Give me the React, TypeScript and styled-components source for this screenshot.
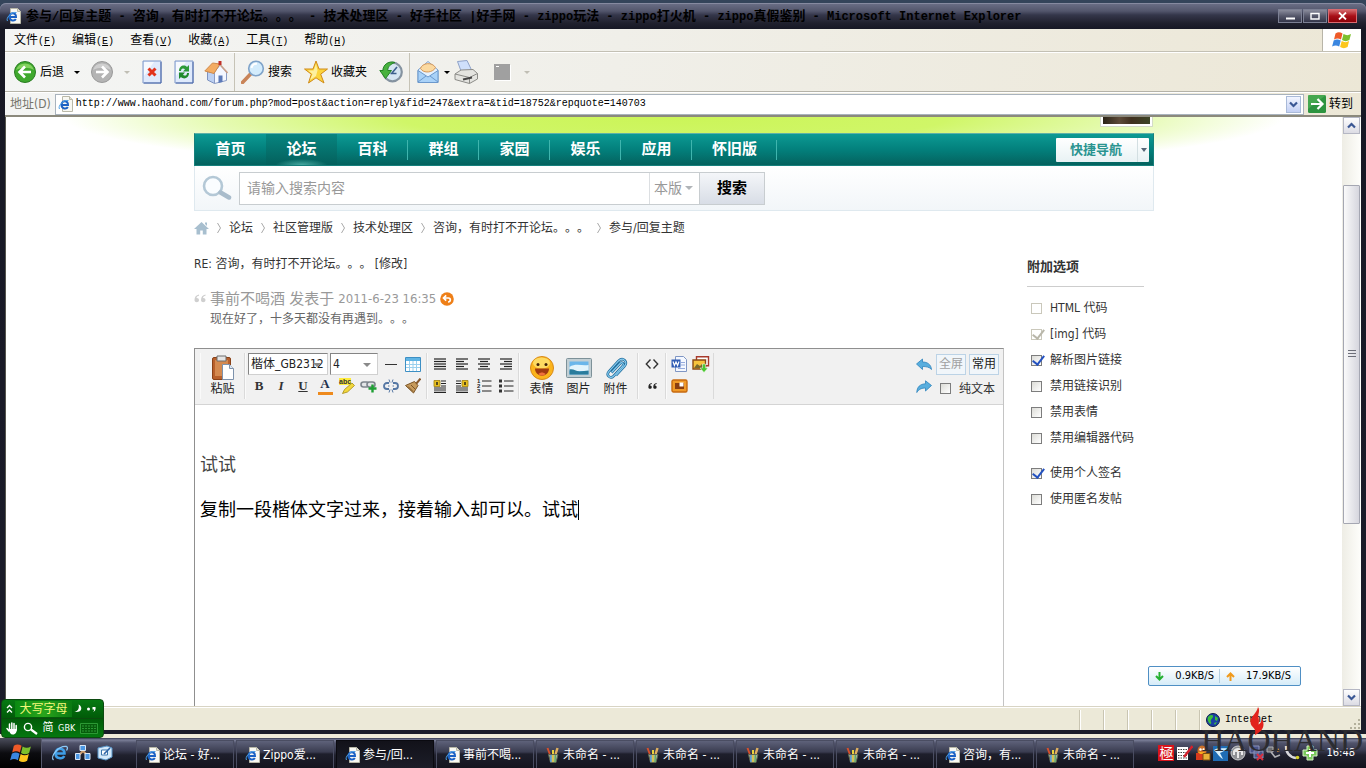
import React from "react";
import styled, { createGlobalStyle, css } from "styled-components";

const UI = '"DejaVu Sans Condensed", "Noto Sans CJK SC", sans-serif';
const MONO = '"Liberation Mono", "Noto Sans CJK SC", monospace';

const Global = createGlobalStyle`
  * { box-sizing: border-box; }
  body { margin: 0; background: #1b1c28; font-family: ${UI}; font-size: 12px; line-height: 16px; color: #000; text-spacing-trim: space-all; font-feature-settings: "chws" 0, "halt" 0; }
  button, input, select { font: inherit; color: inherit; margin: 0; padding: 0; border: 0; background: none; border-radius: 0; }
  button { cursor: pointer; }
  a { color: inherit; text-decoration: none; }
  svg { display: block; flex: none; }
  h2, p, ul, ol { margin: 0; padding: 0; }
  ul, ol { list-style: none; }
`;

/* ---------- window frame ---------- */

const Desktop = styled.div`
  position: relative;
  display: flex;
  flex-direction: column;
  height: 100vh;
  min-height: 480px;
  padding-top: 3px;
  background: #34445a;
  overflow: hidden;
`;

const Window = styled.div`
  flex: 1;
  min-height: 0;
  display: flex;
  flex-direction: column;
  padding: 0 5px 4px;
  border-radius: 6px 6px 0 0;
  background: linear-gradient(#6c7088 0, #53566c 8px, #34364a 12px, #20212e 20px, #171824 26px, #1b1c2a 100%);
  box-shadow: inset 0 1px 0 #868aa0;
`;

const TitleBar = styled.header`
  display: flex;
  align-items: center;
  height: 26px;
  padding: 0 4px 0 1px;
`;

const TitleText = styled.div`
  flex: 1;
  min-width: 0;
  margin-left: 4px;
  padding-top: 2px;
  overflow: hidden;
  white-space: pre;
  font: bold 12px/16px ${MONO};
`;

const Han = styled.span`
  font-size: 13px;
`;

const WindowButtons = styled.div`
  display: flex;
  gap: 1px;
`;

const WindowButton = styled.button<{ $close?: boolean }>`
  display: flex;
  align-items: center;
  justify-content: center;
  width: ${(p) => (p.$close ? 29 : 24)}px;
  height: 14px;
  border: 1px solid ${(p) => (p.$close ? "#d86a70" : "#7c8094")};
  background: ${(p) =>
    p.$close
      ? "linear-gradient(#d4686c, #a81018 50%, #8c0008)"
      : "linear-gradient(#8a8c9c, #55576a 50%, #34364a)"};
`;

const Chrome = styled.div`
  background: linear-gradient(100deg, #f4f5f4 0, #f0efe9 45%, #ece7d6 100%);
`;

const MenuBar = styled.nav`
  display: flex;
  height: 23px;
  padding-left: 1px;
  border-bottom: 1px solid #c3c0b4;
`;

const MenuItem = styled.button`
  padding: 2px 8px 0;
  white-space: nowrap;
`;

const Key = styled.span`
  font: 10px/16px ${MONO};
  u { text-underline-offset: 1px; }
`;

const Throbber = styled.div`
  display: flex;
  align-items: center;
  justify-content: center;
  width: 39px;
  margin-left: auto;
  border-left: 1px solid #b8b5a8;
  background: #fff;
`;

const ToolBar = styled.div`
  display: flex;
  align-items: center;
  height: 40px;
  padding-left: 8px;
  border-top: 1px solid #fff;
  border-bottom: 1px solid #b5b3a8;
`;

const ToolGroup = styled.div<{ $gap?: number }>`
  display: flex;
  align-items: center;
  gap: ${(p) => p.$gap ?? 0}px;
`;

const ToolButton = styled.button`
  display: flex;
  align-items: center;
  gap: 3px;
  white-space: nowrap;
`;

const DropButton = styled.button<{ $wide?: boolean; $off?: boolean }>`
  display: flex;
  justify-content: center;
  width: ${(p) => (p.$wide ? 26 : 14)}px;
  &::after {
    content: "";
    border: 3px solid transparent;
    border-top-color: ${(p) => (p.$off ? "#c0beb4" : "#000")};
    border-bottom: 0;
  }
`;

const ToolSeparator = styled.div`
  width: 1px;
  height: 38px;
  margin: 0 6px;
  background: #c6c3b6;
`;

const AddressBar = styled.form`
  display: flex;
  align-items: center;
  height: 25px;
  padding: 0 8px 0 5px;
  border-top: 1px solid #fff;
  border-bottom: 2px solid #8b897c;
  gap: 4px;
`;

const AddressLabel = styled.label`
  color: #76756c;
  white-space: nowrap;
`;

const AddressField = styled.div`
  flex: 1;
  min-width: 0;
  display: flex;
  align-items: center;
  gap: 2px;
  height: 21px;
  padding: 0 2px;
  border: 1px solid #a9b3bd;
  background: #fff;
`;

const AddressInput = styled.input`
  flex: 1;
  min-width: 0;
  font: 10px/16px ${MONO};
  outline: 0;
`;

const SquareButton = styled.button`
  display: flex;
  align-items: center;
  justify-content: center;
  flex: none;
  width: 15px;
  height: 17px;
  border: 1px solid #a9bad8;
  background: linear-gradient(#f2f5ff, #c3d0f4);
`;

/* ---------- viewport ---------- */

const Viewport = styled.div`
  flex: 1;
  min-height: 0;
  display: flex;
  background: #fff;
  border-left: 1px solid #55554e;
`;

const Page = styled.main`
  flex: 1;
  min-width: 0;
  display: flex;
  flex-direction: column;
  color: #333;
  overflow: hidden;
  background: radial-gradient(ellipse 610px 56px at 50% 0, #cbf558 0, #d0f668 45%, #e6fbb4 76%, #fff 100%) no-repeat #fff;
`;

const Center = styled.div`
  flex: 1;
  min-height: 0;
  display: flex;
  flex-direction: column;
  width: 960px;
  max-width: 100%;
  margin: 0 auto;
`;

const TopRow = styled.div`
  display: flex;
  justify-content: flex-end;
  align-items: flex-start;
  height: 16px;
`;

const Avatar = styled.div`
  width: 53px;
  height: 10px;
  margin-right: 1px;
  border: 1px solid #d4dcc8;
  border-top: 0;
  padding: 0 2px 2px;
  background: #fff;
  &::before {
    content: "";
    display: block;
    height: 7px;
    background: linear-gradient(90deg, #2b2418, #5c4a38 35%, #40301f 60%, #3c4426);
  }
`;

const Nav = styled.nav`
  display: flex;
  align-items: stretch;
  flex: none;
  height: 33px;
  border: 1px solid #16807c;
  border-top-color: #5fb0a8;
  background: linear-gradient(#0c9a94, #03807c 50%, #04625e);
`;

const NavLink = styled.a<{ $active?: boolean; $line?: boolean }>`
  position: relative;
  display: flex;
  align-items: center;
  justify-content: center;
  min-width: 71px;
  padding: 0 20px 2px;
  font-size: 15px;
  font-weight: bold;
  color: #fff;
  white-space: nowrap;
  ${(p) =>
    p.$active &&
    css`
      background: radial-gradient(ellipse 26px 6px at 50% 100%, #48aaa2, transparent),
        linear-gradient(#078580, #04605c);
    `}
  ${(p) =>
    p.$line &&
    css`
      &::after {
        content: "";
        position: absolute;
        right: 0;
        top: 6px;
        bottom: 5px;
        width: 1px;
        background: #3fb5ae;
      }
    `}
`;

const QuickNav = styled.button`
  display: flex;
  align-items: stretch;
  align-self: center;
  height: 24px;
  margin-left: auto;
  margin-right: 4px;
  border-radius: 1px;
  background: linear-gradient(#fff, #e8f2f4);
  color: #2a9490;
  font-size: 13px;
  font-weight: bold;
  line-height: 23px;
  white-space: nowrap;
`;

const QuickLabel = styled.span`
  padding: 0 15px 0 14px;
`;

const QuickArrow = styled.span`
  display: flex;
  align-items: center;
  width: 12px;
  padding-left: 3px;
  border-left: 1px solid #d3dfe2;
  &::after {
    content: "";
    border: 3px solid transparent;
    border-top: 4px solid #567;
    border-bottom: 0;
  }
`;

const SearchRow = styled.form`
  display: flex;
  align-items: center;
  flex: none;
  height: 45px;
  padding-left: 7px;
  border: 1px solid #dfe9ef;
  border-top: 0;
  background: linear-gradient(#fff, #f2f6f9);
`;

const SearchBox = styled.div`
  display: flex;
  height: 33px;
  margin-left: 7px;
  border: 1px solid #c8cdd0;
  background: #fff;
`;

const SearchInput = styled.input`
  width: 409px;
  padding: 0 7px;
  font-size: 14px;
  outline: 0;
  &::placeholder { color: #999; }
`;

const ScopeWrap = styled.div`
  display: flex;
  align-items: center;
  width: 50px;
  border-left: 1px solid #dcdfe2;
  padding-left: 4px;
  color: #999;
  font-size: 14px;
  &::after {
    content: "";
    border: 4px solid transparent;
    border-top-color: #b0b4b8;
    border-bottom: 0;
  }
`;

const ScopeSelect = styled.select`
  appearance: none;
  width: 31px;
  outline: 0;
`;

const SearchButton = styled.button`
  width: 65px;
  border-left: 1px solid #c8cdd0;
  background: linear-gradient(#f4f6f9, #d8dde6);
  color: #000;
  font-size: 15px;
  font-weight: bold;
`;

const Crumbs = styled.ol`
  display: flex;
  align-items: center;
  flex: none;
  height: 33px;
  white-space: nowrap;
  li { display: flex; align-items: center; }
`;

const Split = styled.div`
  flex: 1;
  min-height: 0;
  display: flex;
  justify-content: space-between;
`;

const MainColumn = styled.section`
  display: flex;
  flex-direction: column;
  width: 810px;
  padding-top: 12px;
`;

const Subject = styled.p``;

const Quote = styled.blockquote`
  display: grid;
  grid-template-columns: 16px 1fr;
  align-items: center;
  row-gap: 2px;
  margin: 16px 0 19px;
  color: #666;
`;

const QuoteHead = styled.div`
  display: flex;
  align-items: center;
  gap: 4px;
  height: 21px;
  color: #999;
  font-size: 15px;
`;

const QuoteDate = styled.time`
  font-size: 13px;
`;

const QuoteBody = styled.p`
  grid-column: 2;
  height: 18px;
`;

/* ---------- editor ---------- */

const Editor = styled.div`
  flex: 1;
  min-height: 0;
  display: flex;
  flex-direction: column;
  border: 1px solid #8f8f8f;
  border-right-color: #c4c4c4;
  border-bottom: 0;
  background: #fff;
`;

const EditorBar = styled.div`
  display: flex;
  align-items: flex-start;
  flex: none;
  height: 56px;
  padding: 4px 4px 0 5px;
  border-bottom: 1px solid #d4d4d4;
  background: #f1f1f1;
`;

const BarSection = styled.div<{ $pad?: number }>`
  display: grid;
  grid-template-rows: 22px 22px;
  height: 46px;
  padding: 0 ${(p) => p.$pad ?? 3}px;
  border-left: 1px solid #fafafa;
  border-right: 1px solid #dadada;
`;

const BarRow = styled.div`
  display: flex;
  align-items: center;
`;

const IconButton = styled.button`
  display: flex;
  align-items: center;
  justify-content: center;
  width: 22px;
  height: 22px;
`;

const TextFormat = styled(IconButton)<{ $italic?: boolean; $underline?: boolean }>`
  font: bold 13px/16px "Liberation Serif", serif;
  font-style: ${(p) => (p.$italic ? "italic" : "normal")};
  text-decoration: ${(p) => (p.$underline ? "underline" : "none")};
  color: #333;
`;

const FontColor = styled(TextFormat)`
  &::before {
    content: "A";
    width: 15px;
    height: 14px;
    line-height: 12px;
    border-bottom: 3px solid #ee8a1d;
    color: #22304c;
  }
`;

const BigButton = styled.button`
  display: flex;
  flex-direction: column;
  align-items: center;
  grid-row: 1 / 3;
  width: 37px;
  padding-top: 2px;
  color: #222;
  white-space: nowrap;
`;

const BigRow = styled.div`
  display: flex;
  grid-row: 1 / 3;
`;

const SelectWrap = styled.div<{ $size: "font" | "number" }>`
  position: relative;
  width: ${(p) => (p.$size === "font" ? 80 : 48)}px;
  height: 22px;
  margin-right: 2px;
  border: 1px solid #848484;
  border-right-color: #d0d0d0;
  border-bottom-color: #d0d0d0;
  background: #fff;
  &::after {
    content: "";
    position: absolute;
    right: 6px;
    top: 9px;
    border: 4px solid transparent;
    border-top-color: #8a8a8a;
    border-bottom: 0;
  }
`;

const FormatSelect = styled.select`
  appearance: none;
  display: block;
  width: 100%;
  height: 20px;
  padding-left: 2px;
  color: #222;
  outline: 0;
`;

const BarTail = styled.div`
  display: grid;
  grid-template-columns: 22px auto;
  grid-template-rows: 22px 24px;
  align-items: center;
  margin-left: auto;
  column-gap: 1px;
`;

const TailRow = styled.div`
  display: flex;
  align-items: center;
  gap: 3px;
`;

const TailButton = styled.button<{ $off?: boolean }>`
  width: 30px;
  height: 21px;
  border: 1px solid #bcd3e6;
  background: #f1f6fa;
  color: ${(p) => (p.$off ? "#a0a0a0" : "#222")};
`;

const PlainText = styled.div`
  display: flex;
  align-items: center;
  gap: 8px;
  padding: 3px 0 0 4px;
  white-space: nowrap;
`;

const EditorBody = styled.div`
  flex: 1;
  min-height: 0;
  padding: 46px 5px 0;
  font-size: 18px;
  line-height: 28px;
  overflow: hidden;
  outline: 0;
`;

const BodyLine = styled.p<{ $typed?: boolean }>`
  display: flex;
  align-items: center;
  margin-bottom: 17px;
  color: ${(p) => (p.$typed ? "#000" : "#444")};
  white-space: nowrap;
`;

const Caret = styled.span`
  width: 1px;
  height: 20px;
  background: #000;
`;

/* ---------- options ---------- */

const Aside = styled.aside`
  width: 127px;
  padding: 15px 10px 0 0;
`;

const AsideTitle = styled.h2`
  padding-bottom: 11px;
  border-bottom: 1px solid #cdcdcd;
  font-size: 13px;
  line-height: 16px;
`;

const OptionList = styled.ul<{ $first?: boolean }>`
  padding: ${(p) => (p.$first ? "8px" : "9px")} 0 0 4px;
`;

const Option = styled.li`
  display: flex;
  align-items: center;
  gap: 8px;
  height: 26px;
  white-space: nowrap;
`;

const Check = styled.input.attrs({ type: "checkbox" })`
  appearance: none;
  position: relative;
  flex: none;
  width: 11px;
  height: 11px;
  border: 1px solid #7d7d7d;
  background: linear-gradient(135deg, #dcdcd7, #fff);
  &:disabled { border-color: #cac8bb; background: #fff; }
  &:checked::after {
    content: "";
    position: absolute;
    left: 3px;
    top: -3px;
    width: 5px;
    height: 10px;
    border: solid #2452c0;
    border-width: 0 2px 2px 0;
    transform: rotate(38deg);
  }
  &:checked:disabled::after { border-color: #b9b7aa; }
`;

/* ---------- scrollbar ---------- */

const ScrollBar = styled.div`
  display: flex;
  flex-direction: column;
  width: 19px;
  padding: 0 1px;
  background: linear-gradient(90deg, #eeede5, #fefefb);
`;

const ScrollArrow = styled.button`
  display: flex;
  align-items: center;
  justify-content: center;
  height: 17px;
  border: 1px solid #b5b7c4;
  background: linear-gradient(#fdfdfe, #dcdce4);
`;

const ScrollTrack = styled.div`
  flex: 1;
  display: flex;
  flex-direction: column;
`;

const ScrollGap = styled.div<{ $share: number }>`
  flex: ${(p) => p.$share};
`;

const ScrollThumb = styled.div`
  flex: 338;
  display: flex;
  align-items: center;
  justify-content: center;
  border: 1px solid #a5a7b2;
  border-radius: 1px;
  background: linear-gradient(90deg, #fafafa, #d6d6de);
`;

/* ---------- status bar ---------- */

const StatusBar = styled.footer`
  display: flex;
  align-items: stretch;
  height: 24px;
  padding-top: 3px;
  border-top: 1px solid #d8d4c4;
  background: #ece9d8;
  box-shadow: inset 0 1px 0 #fff;
`;

const StatusSpace = styled.div`
  flex: 1;
`;

const StatusCell = styled.div<{ $zone?: boolean }>`
  display: flex;
  align-items: center;
  gap: 5px;
  width: ${(p) => (p.$zone ? 162 : 24)}px;
  padding-left: 6px;
  border-left: 1px solid #c9c5b2;
  box-shadow: inset 1px 0 0 #fff;
  font: 10px/16px ${MONO};
`;

const Grip = styled.div`
  margin-left: auto;
  align-self: flex-end;
`;

/* ---------- task bar ---------- */

const TaskBar = styled.footer`
  display: flex;
  align-items: stretch;
  flex: none;
  height: 34px;
  border-top: 4px solid #efebd9;
  background: linear-gradient(#343850 0, #7b7f98 2px, #50536b 5px, #3a3c52 12px, #20212e 17px, #12121c 100%);
`;

const StartButton = styled.button`
  display: flex;
  align-items: center;
  justify-content: center;
  width: 42px;
  border-right: 1px solid #55586c;
  background: linear-gradient(#4b4d5c, #0c0c10 50%, #000);
`;

const QuickLaunch = styled.div`
  display: flex;
  align-items: center;
  gap: 5px;
  width: 93px;
  padding-left: 9px;
`;

const TaskList = styled.div`
  display: flex;
  padding-top: 2px;
`;

const Task = styled.button<{ $active?: boolean }>`
  display: flex;
  align-items: center;
  gap: 2px;
  width: 98px;
  margin: 0 1px;
  padding-left: 8px;
  border: 1px solid ${(p) => (p.$active ? "#0a0a10" : "#4a4d62")};
  border-bottom: 0;
  background: ${(p) =>
    p.$active ? "linear-gradient(#12121a, #1c1d28)" : "linear-gradient(#5e627a, #3a3c50 11px, #1e1f2c 13px, #15151f)"};
  color: #fff;
  white-space: nowrap;
`;

const Tray = styled.div`
  display: flex;
  align-items: center;
  gap: 2px;
  margin-left: auto;
  padding-right: 11px;
`;

const Seal = styled.span`
  width: 16px;
  height: 16px;
  background: #d8141c;
  color: #fff;
  font-size: 14px;
  line-height: 16px;
  text-align: center;
`;

const Clock = styled.time`
  margin-left: 6px;
  color: #fff;
  font-size: 11px;
`;

/* ---------- floating widgets ---------- */

const SpeedMeter = styled.div`
  position: absolute;
  right: 65px;
  bottom: 82px;
  display: flex;
  align-items: center;
  justify-content: space-between;
  width: 153px;
  height: 20px;
  padding: 0 9px 0 6px;
  border: 1px solid #4f8fc4;
  border-radius: 2px;
  background: linear-gradient(#fff, #d6ecf8);
  font-size: 11px;
`;

const MeterLine = styled.span`
  width: 1px;
  height: 14px;
  margin: 0 -6px;
  background: #b4cfe0;
`;

const ImeBar = styled.div`
  position: absolute;
  left: 1px;
  bottom: 30px;
  display: flex;
  flex-direction: column;
  width: 103px;
  height: 39px;
  border: 1px solid #0c4a10;
  border-radius: 4px;
  background: linear-gradient(#067a12, #015a08 50%, #05780f);
  color: #fff;
`;

const ImeRow = styled.div`
  display: flex;
  align-items: center;
  justify-content: space-between;
  flex: 1;
  padding: 0 5px 0 4px;
  & + & { border-top: 1px solid #0b4c0e; }
`;

const ImeMode = styled.button`
  padding: 0 4px;
  background: linear-gradient(90deg, #0a8a12, #2aa51c 50%, #0a7a12);
  color: #f4f77a;
  white-space: nowrap;
`;

const ImeLabel = styled.span`
  font-size: 11px;
`;

const Gbk = styled.span`
  font: 9px/14px "DejaVu Sans Condensed", sans-serif;
`;

const Watermark = styled.div`
  position: absolute;
  right: 3px;
  bottom: 16px;
  color: #2c2c30;
  font: 32px/24px "Liberation Serif", serif;
  pointer-events: none;
  svg {
    position: absolute;
    left: 48px;
    bottom: 17px;
  }
`;

/* ---------- icons ---------- */

const IePage = () => (
  <svg width="16" height="16" viewBox="0 0 16 16">
    <path d="M4.5.5h7l3 3v12h-10z" fill="#f8f8f2" stroke="#b9b8a8" />
    <path d="M11.500.5v3h3" fill="#e4e2d2" stroke="#b9b8a8" />
    <path d="M3 9h7c0-5-6.500-5-6.500-.200C3.500 13 8.500 13.500 9.800 11" fill="none" stroke="#1c62c4" strokeWidth="2" />
    <path d="M1.500 13C-.5 10.500 5 3.500 10.500 4.500" fill="none" stroke="#4aa0e8" />
  </svg>
);

const IeLogo = () => (
  <svg width="18" height="18" viewBox="0 0 18 18">
    <path d="M4.500 9.500h9c.3-6-8.700-6.500-8.900-.3C4.500 15 11.500 15.500 13.200 12" fill="none" stroke="#3f9fe8" strokeWidth="2.600" />
    <path d="M2.500 16C-1 13 7 1.500 15.500 2.500c1.500.5 1 2.500 0 4" fill="none" stroke="#8ccaf8" strokeWidth="1.300" />
  </svg>
);

const WinFlag = ({ size }: { size: number }) => (
  <svg width={size} height={size} viewBox="0 0 20 20">
    <path d="M3.500 3.500c2.500-1.700 4.500-1.500 7 0L9 9.500c-2.500-1.500-4.500-1.500-7 0z" fill="#ee5a28" />
    <path d="M11.500 4c2.500 1.500 5 1.500 7.500 0l-1.600 6c-2.500 1.500-4.900 1.500-7.400 0z" fill="#7cc02c" />
    <path d="M1.700 10.600c2.500-1.600 4.500-1.500 7 0l-1.500 6c-2.500-1.500-4.500-1.500-7.100 0z" fill="#3a86e0" />
    <path d="M9.700 11c2.500 1.500 4.900 1.500 7.400 0l-1.500 6c-2.500 1.500-5 1.500-7.500 0z" fill="#fcc61c" />
  </svg>
);

const RoundArrow = ({ off }: { off?: boolean }) => (
  <svg width="24" height="24" viewBox="0 0 24 24">
    <circle cx="12" cy="12" r="10.500" fill={off ? "#b4b4b4" : "#3fa82e"} stroke={off ? "#9a9a9a" : "#2a7d22"} />
    <path d="M3 10a9.500 9.500 0 0 1 18 0c-5-3-12-3-18 0z" fill={off ? "#cfcfcf" : "#82d25e"} />
    <path
      d={off ? "M6 12h11M12 6.500l5.500 5.500L12 17.500" : "M18 12H7M12 6.500L6.500 12l5.500 5.500"}
      fill="none"
      stroke="#fff"
      strokeWidth="2.600"
    />
  </svg>
);

const StopIcon = () => (
  <svg width="24" height="24" viewBox="0 0 24 24">
    <path d="M3 1h18v22H3z" fill="#dfeafc" stroke="#7c96c8" />
    <path d="M4 2h10L4 16z" fill="#fff" opacity=".7" />
    <path d="M21 2v21H4" fill="none" stroke="#4c68a8" />
    <path d="M8.500 8.500l7 7M15.500 8.500l-7 7" stroke="#e2331c" strokeWidth="3" />
  </svg>
);

const RefreshIcon = () => (
  <svg width="24" height="24" viewBox="0 0 24 24">
    <path d="M3 1h18v22H3z" fill="#dfeafc" stroke="#7c96c8" />
    <path d="M4 2h10L4 16z" fill="#fff" opacity=".7" />
    <path d="M21 2v21H4" fill="none" stroke="#4c68a8" />
    <path d="M7 11c0-5 5-7 8-4l2-2v6.500h-6l2-2.200c-2-1.800-4-.8-4 1.700z" fill="#2c9a3a" />
    <path d="M17 13c0 5-5 7-8 4l-2 2v-6.500h6l-2 2.200c2 1.800 4 .8 4-1.700z" fill="#1f8a2e" />
  </svg>
);

const HomeIcon = () => (
  <svg width="24" height="24" viewBox="0 0 24 24">
    <path d="M3.500 11.500v8.500l7 3.500V13z" fill="#bcd0f2" stroke="#7d92c0" />
    <path d="M10.500 23.500V12l5.500-7 6.500 7v8.500z" fill="#f4f7ff" stroke="#8a9cc4" />
    <path d="M.8 11L8.500 3l7.500 1-6 9.500z" fill="#f3ac62" stroke="#cf8a4c" />
    <path d="M15.500 4l8 9" stroke="#c9a088" strokeWidth="1.600" />
    <path d="M14.500 1h3v4h-3z" fill="#c03028" />
    <path d="M14.500 15.500h4v6.500l-4 1z" fill="#5c7ab8" />
  </svg>
);

const SearchIcon = () => (
  <svg width="24" height="24" viewBox="0 0 24 24">
    <path d="M1.500 22.500L10 13.500" stroke="#c98458" strokeWidth="3.600" strokeLinecap="round" />
    <circle cx="15" cy="8.500" r="7.300" fill="#d3ecfc" stroke="#7fa3c9" strokeWidth="1.600" />
    <path d="M10.500 8c.5-3 3-4.500 5.500-4.300" fill="none" stroke="#fff" strokeWidth="2" />
  </svg>
);

const StarIcon = () => (
  <svg width="24" height="24" viewBox="0 0 24 24">
    <path d="M12 1l3 8h8.500l-6.800 5.200L20 23l-8-5.200L4.500 23l2.800-8.800L.5 9H9z" fill="#fbd43c" stroke="#d08a18" />
    <path d="M12 4l1.500 6.500L12 16l-6 4 2.500-6L4 10.500h5.700z" fill="#fdf0a0" />
  </svg>
);

const HistoryIcon = () => (
  <svg width="24" height="24" viewBox="0 0 24 24">
    <circle cx="13.500" cy="12" r="9.300" fill="#d6e6f2" stroke="#8593a0" strokeWidth="2.200" />
    <path d="M13 13l5-6M11.500 13.500h6" stroke="#3c5f8c" strokeWidth="1.600" />
    <path d="M16 2.500C9 .5 4 5 4 10.500H.8l5.700 8 6-8H8.700c0-4 3-6.500 7.300-8z" fill="#48b23e" stroke="#258426" />
  </svg>
);

const MailIcon = () => (
  <svg width="24" height="24" viewBox="0 0 24 24">
    <path d="M2 10L12 1.500 22 10v12.500H2z" fill="#e5f1fe" stroke="#7ba0cc" />
    <path d="M4.500 8.500C6 3 16 1.500 19.500 7.500c-2 5-12 6.500-15 1z" fill="#fbd9a0" stroke="#d8995a" />
    <path d="M2 10.500l10 6.500 10-6.500v12H2z" fill="#a9d2f8" stroke="#6b98cc" />
    <path d="M2 22l8-6M22 22l-8-6" stroke="#6b98cc" />
  </svg>
);

const PrinterIcon = () => (
  <svg width="24" height="24" viewBox="0 0 24 24">
    <path d="M3.500 1.500L13 .5l5 10.500H7z" fill="#cfe0fb" stroke="#8fa2c8" />
    <path d="M1 14l6-4 12-.5 4.500 4v5.500l-8 4.500-14.500-4z" fill="#e4e4e0" stroke="#8c8c88" />
    <path d="M1 14l14.500 3.500 8-4M15.500 17.500v6" fill="none" stroke="#8c8c88" />
    <path d="M9 19.500l9-2" stroke="#444" strokeWidth="2" />
  </svg>
);

const SquareIcon = () => (
  <svg width="24" height="24" viewBox="0 0 24 24">
    <path d="M5 5h16v16H5z" fill="#fff" />
    <path d="M4 4h16v16H4z" fill="#a0a0a0" />
    <path d="M6 6.500h3" stroke="#fff" />
  </svg>
);

const Chevron = ({ up }: { up?: boolean }) => (
  <svg width="9" height="7" viewBox="0 0 9 7">
    <path d={up ? "M1 5.500L4.500 2 8 5.500" : "M1 1.500L4.500 5 8 1.500"} fill="none" stroke="#3a5794" strokeWidth="2.200" />
  </svg>
);

const GoIcon = () => (
  <svg width="18" height="18" viewBox="0 0 18 18">
    <rect width="18" height="18" rx="1.500" fill="#2d9440" />
    <path d="M0 0h18L0 14z" fill="#55b45c" opacity=".6" />
    <path d="M3 9h11M9.500 4l5 5-5 5" fill="none" stroke="#fff" strokeWidth="2.200" />
  </svg>
);

const PaleLens = () => (
  <svg width="30" height="26" viewBox="0 0 30 26">
    <circle cx="11" cy="11" r="9" fill="#fafdff" stroke="#b4c8d6" strokeWidth="2.600" />
    <path d="M18.500 17.500l8.500 5" stroke="#a9bccb" strokeWidth="4.500" strokeLinecap="round" />
  </svg>
);

const HouseIcon = () => (
  <svg width="15" height="14" viewBox="0 0 15 14">
    <path d="M7.500 1L0 8h2.500v5.500h3.700V9.500h2.600v4h3.700V8H15z" fill="#a8bfcf" />
    <path d="M11 1.500h2V5l-2-2z" fill="#a8bfcf" />
  </svg>
);

const CrumbArrow = () => (
  <svg width="20" height="12" viewBox="0 0 20 12">
    <path d="M8.500 1l3 5-3 5" fill="none" stroke="#a9a9a9" />
  </svg>
);

const QuoteMarks = () => (
  <svg width="12" height="9" viewBox="0 0 12 9">
    <path d="M5 .5C2 1 .5 3 .5 6c0 3 4.500 3 4.500 0 0-1.500-1.200-2.200-2.500-2C2.500 2.800 3.500 2 5 1.700zM11.500.5C8.500 1 7 3 7 6c0 3 4.500 3 4.500 0 0-1.500-1.200-2.200-2.500-2 0-1.200 1-2 2.500-2.300z" fill="#cfcfcf" />
  </svg>
);

const ReplyIcon = () => (
  <svg width="14" height="14" viewBox="0 0 14 14">
    <circle cx="7" cy="7" r="6.800" fill="#ee7f18" />
    <path d="M4 6h4.500c2.500 0 2.500 4-.5 4M6.200 3.300L3.500 6l2.700 2.700" fill="none" stroke="#fff" strokeWidth="1.700" />
  </svg>
);

const PasteIcon = () => (
  <svg width="24" height="26" viewBox="0 0 24 26">
    <rect x="1.500" y="2.500" width="18" height="22" rx="1.500" fill="#b8602c" stroke="#8a4218" />
    <path d="M4 5h13v16H4z" fill="#d48a50" />
    <path d="M6 1h9v5H6z" fill="#e4e4e4" stroke="#6c6c6c" />
    <path d="M11.500 9.500h7l4 4v11h-11z" fill="#fff" stroke="#7d92ac" />
    <path d="M18.500 9.500v4h4" fill="#dde8f4" stroke="#7d92ac" />
  </svg>
);

const DashIcon = () => (
  <svg width="12" height="12" viewBox="0 0 12 12">
    <path d="M0 6.500h12" stroke="#333" />
  </svg>
);

const TableIcon = () => (
  <svg width="16" height="15" viewBox="0 0 16 15">
    <path d="M.5.5h15v14H.5z" fill="#fff" stroke="#3c8fc4" />
    <path d="M1 1h14v3H1z" fill="#5fb4e4" />
    <path d="M1 7.500h14M1 10.500h14M4.500 4v10M8 4v10M11.500 4v10" stroke="#9ad0ee" />
  </svg>
);

const HighlightIcon = () => (
  <svg width="18" height="18" viewBox="0 0 18 18">
    <path d="M1 1h12v7H1z" fill="#ffec3c" />
    <text x="1" y="7" fontSize="7" fontWeight="bold" fontFamily="Liberation Sans" fill="#333">abc</text>
    <path d="M4.500 16.500l2-4 7.500-6.500 2.500 2.500-7 6.500z" fill="#f2d83c" stroke="#a68a14" strokeWidth=".8" />
  </svg>
);

const LinkIcon = () => (
  <svg width="18" height="14" viewBox="0 0 18 14">
    <rect x="1" y="3" width="8" height="5" rx="2.500" fill="#e4e6e8" stroke="#7d858c" strokeWidth="1.600" />
    <rect x="7" y="3" width="8" height="5" rx="2.500" fill="#e4e6e8" stroke="#7d858c" strokeWidth="1.600" />
    <path d="M12.500 5.500v8M8.500 9.500h8" stroke="#1f9f34" strokeWidth="2.400" />
  </svg>
);

const UnlinkIcon = () => (
  <svg width="16" height="16" viewBox="0 0 16 16">
    <path d="M6 5H4a3 3 0 0 0 0 6h2M10 5h2a3 3 0 0 1 0 6h-2" fill="none" stroke="#5577a4" strokeWidth="1.800" />
    <path d="M6 1.500l1 3M10 1.500L9 4.500M6 14.500l1-3M10 14.500L9 11.500M5 8h1.500M9.500 8H11" stroke="#5577a4" />
  </svg>
);

const BroomIcon = () => (
  <svg width="16" height="16" viewBox="0 0 16 16">
    <path d="M15.500.5L11 6" stroke="#8a5a2c" strokeWidth="2" />
    <path d="M.5 7.500L9.500 3.500l3.500 4L8.500 15z" fill="#c69a5c" stroke="#7c5526" />
    <path d="M3 8.500l5 5M6 7l4 4" stroke="#7c5526" />
  </svg>
);

type AlignKind = "full" | "left" | "center" | "right";
const alignEdge: Record<AlignKind, (i: number) => string> = {
  full: () => "M1 YH13",
  left: (i) => (i % 2 ? "M1 YH9" : "M1 YH13"),
  center: (i) => (i % 2 ? "M3 YH11" : "M1 YH13"),
  right: (i) => (i % 2 ? "M5 YH13" : "M1 YH13"),
};

const AlignIcon = ({ kind }: { kind: AlignKind }) => (
  <svg width="14" height="13" viewBox="0 0 14 13">
    {[0, 1, 2, 3, 4].map((i) => (
      <path key={i} d={alignEdge[kind](i).replace("Y", `${i * 2.5 + 1}`)} stroke="#222" strokeWidth="1.200" />
    ))}
  </svg>
);

const FloatIcon = ({ right }: { right?: boolean }) => (
  <svg width="14" height="13" viewBox="0 0 14 13">
    <path d="M1 10H13M1 12.300H13" stroke="#222" strokeWidth="1.200" />
    <path d={right ? "M1 1H6M1 3.500H6M1 6H6" : "M8 1h5M8 3.500h5M8 6h5"} stroke="#222" strokeWidth="1.200" />
    <path d={right ? "M7 .5h6v6H7z" : "M1 .5h6v6H1z"} fill="#e8c020" stroke="#a08010" strokeWidth=".8" />
    <path d={right ? "M9 2h2v3H9z" : "M3 2h2v3H3z"} fill="#574a18" />
    <path d="M1 8H13" stroke="#222" />
  </svg>
);

const NumberListIcon = () => (
  <svg width="16" height="16" viewBox="0 0 16 16">
    <path d="M6 3h9.500M6 8h9.500M6 13h9.500" stroke="#222" />
    {[1, 2, 3].map((n) => (
      <text key={n} x="1" y={n * 5} fontSize="6" fontWeight="bold" fontFamily="Liberation Sans" fill="#222">{n}</text>
    ))}
  </svg>
);

const BulletListIcon = () => (
  <svg width="16" height="16" viewBox="0 0 16 16">
    <path d="M6 3h9.500M6 8h9.500M6 13h9.500" stroke="#222" />
    <path d="M1 1.500h3v3H1zM1 6.500h3v3H1zM1 11.500h3v3H1z" fill="#333" />
  </svg>
);

const SmileIcon = () => (
  <svg width="26" height="26" viewBox="0 0 26 26">
    <circle cx="13" cy="13" r="11.500" fill="#fbb41c" stroke="#d8891a" />
    <ellipse cx="12.500" cy="8" rx="8.500" ry="5.500" fill="#fdda62" />
    <circle cx="9" cy="9.500" r="1.500" fill="#402008" />
    <circle cx="17" cy="9.500" r="1.500" fill="#402008" />
    <path d="M6 13.500h14c0 9.500-14 9.500-14 0z" fill="#a13a10" />
    <path d="M9.500 19c2-2 5-2 7 0-2 2-5 2-7 0z" fill="#f0703c" />
  </svg>
);

const PictureIcon = () => (
  <svg width="26" height="26" viewBox="0 0 26 26">
    <rect x=".5" y="3.500" width="25" height="19" rx="1" fill="#c2cfd4" stroke="#7d9199" />
    <path d="M3.500 6.500h19v13h-19z" fill="#6ab6ea" />
    <path d="M3.500 12c6-4 12-1 19-2v6h-19z" fill="#e2f4fc" />
    <path d="M3.500 14.500c4-1 6 2 10 2 3 0 6-1 9-1v4h-19z" fill="#2a7c9c" />
  </svg>
);

const ClipIcon = () => (
  <svg width="26" height="26" viewBox="0 0 26 26">
    <path
      d="M8.500 17.500l8.500-9c2-2 4.500.5 2.700 2.700l-9 9.800c-3.500 3.500-8-.8-4.700-4.600L15.500 6c4.500-4.500 9.800.8 5.800 5.300l-8.300 9.200"
      fill="none"
      stroke="#1f6c9c"
      strokeWidth="2.600"
    />
    <path
      d="M8.500 17.500l8.500-9c2-2 4.500.5 2.700 2.700l-9 9.800c-3.500 3.500-8-.8-4.700-4.600L15.500 6c4.500-4.500 9.800.8 5.800 5.300l-8.300 9.200"
      fill="none"
      stroke="#8acdf0"
      strokeWidth="1.100"
    />
  </svg>
);

const CodeIcon = () => (
  <svg width="14" height="12" viewBox="0 0 14 12">
    <path d="M5.500 1.500L1.300 6l4.200 4.500M8.500 1.500L12.700 6l-4.200 4.500" fill="none" stroke="#333" strokeWidth="1.400" />
  </svg>
);

const QuoteTool = () => (
  <svg width="9" height="8" viewBox="0 0 12 9">
    <path d="M5 .5C2 1 .5 3 .5 6c0 3 4.500 3 4.500 0 0-1.500-1.200-2.200-2.500-2C2.500 2.800 3.500 2 5 1.700zM11.500.5C8.500 1 7 3 7 6c0 3 4.500 3 4.500 0 0-1.500-1.200-2.200-2.500-2 0-1.200 1-2 2.500-2.300z" fill="#222" />
  </svg>
);

const WordIcon = () => (
  <svg width="16" height="16" viewBox="0 0 16 16">
    <path d="M4.500.5h8l3 3v12h-11z" fill="#f4f8ff" stroke="#7f96c4" />
    <path d="M10 6.500h4M10 9h4M7 12.500h7" stroke="#94aadc" />
    <path d="M.5 3.500h9v8h-9z" fill="#2f5cb4" />
    <path d="M2 5.500l1.400 4L5 6l1.600 3.500L8 5.500" fill="none" stroke="#fff" strokeWidth="1.200" />
  </svg>
);

const RemoteIcon = () => (
  <svg width="18" height="17" viewBox="0 0 18 17">
    <path d="M4.500.800h12v9h-12z" fill="#fff" stroke="#a83a2c" strokeWidth="1.400" />
    <path d="M1 4h12.500v9H1z" fill="#f7c43c" stroke="#8a4a14" strokeWidth="1.400" />
    <path d="M2 12l3-4 3 2 2-2 3 4z" fill="#7a6a2c" />
    <path d="M10.500 8h3v4h2.500l-4 4.500-4-4.500h2.500z" fill="#4cc832" stroke="#fff" strokeWidth=".5" />
  </svg>
);

const PageBreakIcon = () => (
  <svg width="17" height="14" viewBox="0 0 17 14">
    <rect x="1" y="1" width="15" height="12" rx="1.500" fill="#f09a28" stroke="#c66a10" strokeWidth="1.400" />
    <path d="M4 4h9v6H4z" fill="#8a3e10" />
    <path d="M8.500 3.500h4v4h-4z" fill="#fff" />
  </svg>
);

const UndoIcon = ({ flip }: { flip?: boolean }) => (
  <svg width="16" height="14" viewBox="0 0 16 14">
    <path
      d={flip ? "M15.500 5.500L9.500.8v3C4 4 1 7 .8 12.500 3 9 6 8 9.500 8v3z" : "M.5 7L6.500 2v3c5 0 8.500 2.500 9 7.500C13.500 10 10 9.500 6.500 9.500v3z"}
      fill="#58aede"
      stroke="#2f84bc"
      strokeWidth=".8"
    />
  </svg>
);

const GripLines = () => (
  <svg width="8" height="8" viewBox="0 0 8 8">
    <path d="M0 .5h8M0 3.500h8M0 6.500h8" stroke="#6c6e78" />
  </svg>
);

const GlobeIcon = () => (
  <svg width="14" height="14" viewBox="0 0 14 14">
    <circle cx="7" cy="7" r="6.500" fill="#1a3fa4" stroke="#0c1c4c" />
    <path d="M3 3c2-2 5-1 4 1S4 7 5 9s-1 3-2.500 0S1.500 4 3 3zM9 3l3 2-1 3-2-1zM8 10l3-1-2 3z" fill="#3cc03c" />
  </svg>
);

const GripDots = () => (
  <svg width="11" height="11" viewBox="0 0 11 11">
    <path d="M8 0h2v2H8zM4 4h2v2H4zM8 4h2v2H8zM0 8h2v2H0zM4 8h2v2H4zM8 8h2v2H8z" fill="#b4b19c" />
  </svg>
);

const NetIcon = () => (
  <svg width="18" height="18" viewBox="0 0 18 18">
    <path d="M9 7l-5 5M9 7l5 5" stroke="#d0a070" strokeWidth="2" />
    <path d="M6 1.500h5.500v5H6zM1.500 9.500H6v6H1.500zM11 9.500h5v6h-5z" fill="#4d98e4" stroke="#dbe8f8" />
  </svg>
);

const DesktopIcon = () => (
  <svg width="16" height="16" viewBox="0 0 16 16">
    <path d="M1 3l9-2 5 2v9l-6 3-8-2z" fill="#d4e9fa" stroke="#5794c8" />
    <path d="M4.500 5h6v5h-6z" fill="#fff" stroke="#3a74ac" />
    <path d="M7 9l6-6" stroke="#2c62a4" strokeWidth="1.600" />
  </svg>
);

const PaintIcon = () => (
  <svg width="16" height="16" viewBox="0 0 16 16">
    <path d="M2.500 1l3 8" stroke="#d8502c" strokeWidth="2" />
    <path d="M8 3v6" stroke="#e8d23c" strokeWidth="2" />
    <path d="M12.500 1L10 9" stroke="#e0b060" strokeWidth="2.400" />
    <path d="M3.500 7.500h9.500L11 15.500H5.500z" fill="#a8b09c" stroke="#5e6650" />
    <path d="M5.800 8v7" stroke="#5a9ad8" strokeWidth="1.500" />
    <path d="M8 8v7" stroke="#e4c83a" strokeWidth="1.500" />
    <path d="M10.500 8L10 15" stroke="#58b060" strokeWidth="1.200" />
  </svg>
);

const NoteTray = () => (
  <svg width="17" height="16" viewBox="0 0 17 16">
    <path d="M1 2h11v13H1z" fill="#fff" />
    <path d="M2 4.500h9M2 7.500h9M2 10.500h9M2 13h9" stroke="#444" strokeDasharray="1.500 1" />
    <path d="M16.500 1L8 12" stroke="#d4202c" strokeWidth="2.400" />
  </svg>
);

const PenguinTray = () => (
  <svg width="16" height="16" viewBox="0 0 16 16">
    <ellipse cx="7" cy="6" rx="4.500" ry="5.500" fill="#c87028" />
    <path d="M1 8h10l1 7H1z" fill="#d83a1c" />
    <circle cx="5.500" cy="4.500" r="1.200" fill="#fff" />
    <circle cx="8.700" cy="4.500" r="1.200" fill="#fff" />
    <path d="M3 7h7l-2 2H5z" fill="#f8a81c" />
    <path d="M8 8.500h7v6.500H8z" fill="#e8b038" stroke="#7c5010" />
  </svg>
);

const BirdTray = () => (
  <svg width="15" height="15" viewBox="0 0 15 15">
    <path d="M0 0h15v15H0z" fill="#1f6cb4" />
    <path d="M1 4c5-3 9-1 13-2-2 3-5 4-7 5l3 6C6 11 5 8 1 4z" fill="#d8f0fc" />
  </svg>
);

const DiscTray = () => (
  <svg width="16" height="16" viewBox="0 0 16 16">
    <circle cx="8" cy="8" r="7" fill="#8e9094" stroke="#c8cacc" />
    <path d="M3 6c2-4 8-4 10 0v4h-2V7H9v6H7V7H5v3H3z" fill="#e8e8e8" />
  </svg>
);

const MonitorTray = () => (
  <svg width="16" height="16" viewBox="0 0 16 16">
    <path d="M2 1h9v7H2zM6 6h9v7H6z" fill="#4a5488" stroke="#8c94bc" />
    <path d="M9 9l6 6M15 9l-6 6" stroke="#d83040" strokeWidth="2" />
  </svg>
);

const PlugTray = () => (
  <svg width="16" height="16" viewBox="0 0 16 16">
    <path d="M1 2h6v5H1z" fill="#6c6c70" stroke="#b0b0b4" />
    <path d="M5 7l4 5 5-2" fill="none" stroke="#b0b0b4" strokeWidth="1.600" />
    <path d="M12 3l2 3-3 1z" fill="#dc8c34" />
  </svg>
);

const DishTray = () => (
  <svg width="16" height="16" viewBox="0 0 16 16">
    <path d="M2 1c0 7 3 11 10 12" fill="none" stroke="#d8d8dc" strokeWidth="2.400" />
    <circle cx="13.500" cy="12.500" r="1.800" fill="#d4d028" />
  </svg>
);

const ShieldTray = () => (
  <svg width="16" height="16" viewBox="0 0 16 16">
    <path d="M5 1h6v4h4v6h-4v4H5v-4H1V5h4z" fill="#78c85c" stroke="#d4f0c4" />
    <path d="M8 4v8M4 8h8" stroke="#fff" strokeWidth="2" />
  </svg>
);

const ArrowMark = ({ up }: { up?: boolean }) => (
  <svg width="9" height="9" viewBox="0 0 9 9">
    <path
      d={up ? "M4.500 9V2M1 5l3.500-3.500L8 5" : "M4.500 0v7M1 4l3.500 3.500L8 4"}
      fill="none"
      stroke={up ? "#f09a1c" : "#24b030"}
      strokeWidth="2"
    />
  </svg>
);

const Flame = () => (
  <svg width="16" height="28" viewBox="0 0 16 28">
    <path d="M9 0c-1 6-7 9-7.500 14.500C1.200 19 5 20 6 23c.5 1.800 0 3.500 0 5 4-2 8.500-5.500 8.500-10.500 0-2.500-.5-4-2-5.500 0 3-1.500 5-3 5.500C11 12 8.500 10.500 9.500 7 10.200 4.500 10.500 2 9 0z" fill="#e2231c" />
  </svg>
);

const HandIcon = () => (
  <svg width="12" height="13" viewBox="0 0 12 13">
    <path d="M3.500 8V2M5.800 7V1M8 7V1.500M10.200 8V3.500M3 9L1 6.500" stroke="#fff" strokeWidth="1.500" strokeLinecap="round" />
    <path d="M2.500 7h8.400c0 3-1.400 5.500-4 5.500S3.500 10.500 2.500 7z" fill="#fff" />
  </svg>
);

const LensIcon = () => (
  <svg width="15" height="13" viewBox="0 0 15 13">
    <circle cx="5" cy="5" r="3.600" fill="none" stroke="#fff" strokeWidth="1.400" />
    <path d="M8 7.500l6 4.500" stroke="#fff" strokeWidth="2.200" />
  </svg>
);

const KeyboardIcon = () => (
  <svg width="18" height="11" viewBox="0 0 18 11">
    <path d="M.5.5h17v10H.5z" fill="#075c0c" stroke="#2c9a34" />
    <path d="M2 3h14M2 5.500h14M2 8h14" stroke="#2c9a34" strokeDasharray="2 1" />
  </svg>
);

const DoubleUp = () => (
  <svg width="7" height="10" viewBox="0 0 7 10">
    <path d="M1 4l2.500-2.500L6 4M1 8.500L3.500 6 6 8.500" fill="none" stroke="#fff" strokeWidth="1.300" />
  </svg>
);

const MoonMarks = () => (
  <svg width="24" height="10" viewBox="0 0 24 10">
    <path d="M4.500.5c4.500 2 4 8.500-4 7.500C4.500 7 5.500 3.500 4.500.5z" fill="#fff" />
    <circle cx="14.500" cy="5" r="1.500" fill="#fff" />
    <path d="M18.500 3h3c.5 2.500-.5 4.500-2.500 5 1-1 1.200-1.800 1-2.500h-1.500z" fill="#fff" />
  </svg>
);

/* ---------- data ---------- */

const menus = [
  ["文件", "F"],
  ["编辑", "E"],
  ["查看", "V"],
  ["收藏", "A"],
  ["工具", "T"],
  ["帮助", "H"],
];

const navLinks = ["首页", "论坛", "百科", "群组", "家园", "娱乐", "应用", "怀旧版"];

const crumbs = ["论坛", "社区管理版", "技术处理区", "咨询，有时打不开论坛。。。", "参与/回复主题"];

type OptionItem = { id: string; label: string; checked?: boolean; disabled?: boolean };

const codeOptions: OptionItem[] = [
  { id: "html", label: "HTML 代码", disabled: true },
  { id: "img", label: "[img] 代码", checked: true, disabled: true },
  { id: "parse", label: "解析图片链接", checked: true },
  { id: "nolink", label: "禁用链接识别" },
  { id: "nosmile", label: "禁用表情" },
  { id: "nocode", label: "禁用编辑器代码" },
];

const postOptions: OptionItem[] = [
  { id: "sign", label: "使用个人签名", checked: true },
  { id: "anon", label: "使用匿名发帖" },
];

const tasks = [
  { label: "论坛 - 好...", ie: true },
  { label: "Zippo爱...", ie: true },
  { label: "参与/回...", ie: true, active: true },
  { label: "事前不喝...", ie: true },
  { label: "未命名 - ..." },
  { label: "未命名 - ..." },
  { label: "未命名 - ..." },
  { label: "未命名 - ..." },
  { label: "咨询，有...", ie: true },
  { label: "未命名 - ..." },
];

const Options = ({ items, first }: { items: OptionItem[]; first?: boolean }) => (
  <OptionList $first={first}>
    {items.map((o) => (
      <Option key={o.id}>
        <Check id={o.id} defaultChecked={o.checked} disabled={o.disabled} />
        <label htmlFor={o.id}>{o.label}</label>
      </Option>
    ))}
  </OptionList>
);

const BrowserChrome = () => (
  <>
    <TitleBar>
      <IePage />
      <TitleText>
        <Han>参与</Han>/<Han>回复主题</Han> - <Han>咨询，有时打不开论坛。。。</Han> - <Han>技术处理区</Han> - <Han>好手社区</Han> |<Han>好手网</Han> - zippo<Han>玩法</Han> - zippo<Han>打火机</Han> - zippo<Han>真假鉴别</Han> - Microsoft Internet Explorer
      </TitleText>
      <WindowButtons>
        <WindowButton aria-label="最小化">
          <svg width="11" height="8" viewBox="0 0 11 8"><path d="M1 6.500h9" stroke="#fff" strokeWidth="2" /></svg>
        </WindowButton>
        <WindowButton aria-label="最大化">
          <svg width="10" height="8" viewBox="0 0 10 8"><path d="M1 1.500h8v5.500H1z" fill="none" stroke="#fff" strokeWidth="1.400" /></svg>
        </WindowButton>
        <WindowButton aria-label="关闭" $close>
          <svg width="9" height="8" viewBox="0 0 9 8"><path d="M1 .5l7 7M8 .5l-7 7" stroke="#fff" strokeWidth="1.800" /></svg>
        </WindowButton>
      </WindowButtons>
    </TitleBar>
    <Chrome>
      <MenuBar>
        {menus.map(([name, key]) => (
          <MenuItem key={key}>
            {name}
            <Key>(<u>{key}</u>)</Key>
          </MenuItem>
        ))}
        <Throbber><WinFlag size={20} /></Throbber>
      </MenuBar>
      <ToolBar>
        <ToolButton><RoundArrow />后退</ToolButton>
        <DropButton $wide aria-label="后退列表" />
        <ToolButton aria-label="前进"><RoundArrow off /></ToolButton>
        <DropButton $wide $off aria-label="前进列表" />
        <ToolGroup $gap={8}>
          <ToolButton aria-label="停止"><StopIcon /></ToolButton>
          <ToolButton aria-label="刷新"><RefreshIcon /></ToolButton>
          <ToolButton aria-label="主页"><HomeIcon /></ToolButton>
        </ToolGroup>
        <ToolSeparator />
        <ToolGroup $gap={12}>
          <ToolButton><SearchIcon />搜索</ToolButton>
          <ToolButton><StarIcon />收藏夹</ToolButton>
          <ToolButton aria-label="历史"><HistoryIcon /></ToolButton>
        </ToolGroup>
        <ToolSeparator />
        <ToolButton aria-label="邮件"><MailIcon /></ToolButton>
        <DropButton aria-label="邮件列表" />
        <ToolGroup $gap={12}>
          <ToolButton aria-label="打印"><PrinterIcon /></ToolButton>
          <ToolButton aria-label="编辑"><SquareIcon /></ToolButton>
        </ToolGroup>
        <DropButton $wide $off aria-label="编辑列表" />
      </ToolBar>
      <AddressBar onSubmit={(e) => e.preventDefault()}>
        <AddressLabel htmlFor="url">地址(D)</AddressLabel>
        <AddressField>
          <IePage />
          <AddressInput
            id="url"
            defaultValue="http://www.haohand.com/forum.php?mod=post&action=reply&fid=247&extra=&tid=18752&repquote=140703"
          />
          <SquareButton type="button" aria-label="地址列表"><Chevron /></SquareButton>
        </AddressField>
        <ToolButton type="submit"><GoIcon />转到</ToolButton>
      </AddressBar>
    </Chrome>
  </>
);

const EditorToolbar = () => (
  <EditorBar>
    <BarSection>
      <BigButton><PasteIcon />粘贴</BigButton>
    </BarSection>
    <BarSection $pad={2}>
      <BarRow>
        <SelectWrap $size="font">
          <FormatSelect aria-label="字体"><option>楷体_GB2312</option></FormatSelect>
        </SelectWrap>
        <SelectWrap $size="number">
          <FormatSelect aria-label="字号"><option>4</option></FormatSelect>
        </SelectWrap>
        <IconButton aria-label="分隔线"><DashIcon /></IconButton>
        <IconButton aria-label="表格"><TableIcon /></IconButton>
      </BarRow>
      <BarRow>
        <TextFormat>B</TextFormat>
        <TextFormat $italic>I</TextFormat>
        <TextFormat $underline>U</TextFormat>
        <FontColor aria-label="文字颜色" />
        <IconButton aria-label="背景色"><HighlightIcon /></IconButton>
        <IconButton aria-label="链接"><LinkIcon /></IconButton>
        <IconButton aria-label="移除链接"><UnlinkIcon /></IconButton>
        <IconButton aria-label="清除格式"><BroomIcon /></IconButton>
      </BarRow>
    </BarSection>
    <BarSection $pad={1}>
      <BarRow>
        <IconButton aria-label="两端对齐"><AlignIcon kind="full" /></IconButton>
        <IconButton aria-label="居左"><AlignIcon kind="left" /></IconButton>
        <IconButton aria-label="居中"><AlignIcon kind="center" /></IconButton>
        <IconButton aria-label="居右"><AlignIcon kind="right" /></IconButton>
      </BarRow>
      <BarRow>
        <IconButton aria-label="左浮动"><FloatIcon /></IconButton>
        <IconButton aria-label="右浮动"><FloatIcon right /></IconButton>
        <IconButton aria-label="编号列表"><NumberListIcon /></IconButton>
        <IconButton aria-label="项目列表"><BulletListIcon /></IconButton>
      </BarRow>
    </BarSection>
    <BarSection>
      <BigRow>
        <BigButton><SmileIcon />表情</BigButton>
        <BigButton><PictureIcon />图片</BigButton>
        <BigButton><ClipIcon />附件</BigButton>
      </BigRow>
    </BarSection>
    <BarSection $pad={2}>
      <IconButton aria-label="代码"><CodeIcon /></IconButton>
      <IconButton aria-label="引用"><QuoteTool /></IconButton>
    </BarSection>
    <BarSection $pad={1}>
      <BarRow>
        <IconButton aria-label="Word"><WordIcon /></IconButton>
        <IconButton aria-label="远程图片"><RemoteIcon /></IconButton>
      </BarRow>
      <BarRow>
        <IconButton aria-label="分页"><PageBreakIcon /></IconButton>
      </BarRow>
    </BarSection>
    <BarTail>
      <IconButton aria-label="撤销"><UndoIcon /></IconButton>
      <TailRow>
        <TailButton $off>全屏</TailButton>
        <TailButton>常用</TailButton>
      </TailRow>
      <IconButton aria-label="重做"><UndoIcon flip /></IconButton>
      <PlainText>
        <Check id="plain" />
        <label htmlFor="plain">纯文本</label>
      </PlainText>
    </BarTail>
  </EditorBar>
);

const ForumPage = () => (
  <Page>
    <Center>
      <TopRow><Avatar /></TopRow>
      <Nav>
        {navLinks.map((name, i) => (
          <NavLink key={name} href="#" $active={i === 1} $line={i > 1}>{name}</NavLink>
        ))}
        <QuickNav>
          <QuickLabel>快捷导航</QuickLabel>
          <QuickArrow />
        </QuickNav>
      </Nav>
      <SearchRow onSubmit={(e) => e.preventDefault()}>
        <PaleLens />
        <SearchBox>
          <SearchInput placeholder="请输入搜索内容" aria-label="搜索内容" />
          <ScopeWrap>
            <ScopeSelect aria-label="搜索范围"><option>本版</option></ScopeSelect>
          </ScopeWrap>
          <SearchButton>搜索</SearchButton>
        </SearchBox>
      </SearchRow>
      <Crumbs>
        <li><a href="#" aria-label="首页"><HouseIcon /></a></li>
        {crumbs.map((c) => (
          <li key={c}><CrumbArrow /><a href="#">{c}</a></li>
        ))}
      </Crumbs>
      <Split>
        <MainColumn>
          <Subject>RE: 咨询，有时打不开论坛。。。 [<a href="#">修改</a>]</Subject>
          <Quote>
            <QuoteMarks />
            <QuoteHead>
              事前不喝酒 发表于
              <QuoteDate>2011-6-23 16:35</QuoteDate>
              <a href="#" aria-label="回复"><ReplyIcon /></a>
            </QuoteHead>
            <QuoteBody>现在好了，十多天都没有再遇到。。。</QuoteBody>
          </Quote>
          <Editor>
            <EditorToolbar />
            <EditorBody>
              <BodyLine>试试</BodyLine>
              <BodyLine $typed>复制一段楷体文字过来，接着输入却可以。试试<Caret /></BodyLine>
            </EditorBody>
          </Editor>
        </MainColumn>
        <Aside>
          <AsideTitle>附加选项</AsideTitle>
          <Options items={codeOptions} first />
          <Options items={postOptions} />
        </Aside>
      </Split>
    </Center>
  </Page>
);

export default function App() {
  return (
    <Desktop>
      <Global />
      <Window>
        <BrowserChrome />
        <Viewport>
          <ForumPage />
          <ScrollBar>
            <ScrollArrow aria-label="向上滚动"><Chevron up /></ScrollArrow>
            <ScrollTrack>
              <ScrollGap $share={51} />
              <ScrollThumb><GripLines /></ScrollThumb>
              <ScrollGap $share={166} />
            </ScrollTrack>
            <ScrollArrow aria-label="向下滚动"><Chevron /></ScrollArrow>
          </ScrollBar>
        </Viewport>
        <StatusBar>
          <StatusSpace />
          <StatusCell />
          <StatusCell />
          <StatusCell />
          <StatusCell />
          <StatusCell />
          <StatusCell $zone>
            <GlobeIcon />
            Internet
            <Grip><GripDots /></Grip>
          </StatusCell>
        </StatusBar>
      </Window>
      <TaskBar>
        <StartButton aria-label="开始"><WinFlag size={22} /></StartButton>
        <QuickLaunch>
          <IeLogo />
          <NetIcon />
          <DesktopIcon />
        </QuickLaunch>
        <TaskList>
          {tasks.map((t, i) => (
            <Task key={i} $active={t.active}>
              {t.ie ? <IePage /> : <PaintIcon />}
              {t.label}
            </Task>
          ))}
        </TaskList>
        <Tray>
          <Seal>極</Seal>
          <NoteTray />
          <PenguinTray />
          <BirdTray />
          <DiscTray />
          <MonitorTray />
          <PlugTray />
          <DishTray />
          <ShieldTray />
          <Clock>16:48</Clock>
        </Tray>
      </TaskBar>
      <SpeedMeter>
        <ArrowMark />
        <span>0.9KB/S</span>
        <MeterLine />
        <ArrowMark up />
        <span>17.9KB/S</span>
      </SpeedMeter>
      <ImeBar>
        <ImeRow>
          <DoubleUp />
          <ImeMode>大写字母</ImeMode>
          <MoonMarks />
        </ImeRow>
        <ImeRow>
          <HandIcon />
          <LensIcon />
          <ImeLabel>简</ImeLabel>
          <Gbk>GBK</Gbk>
          <KeyboardIcon />
        </ImeRow>
      </ImeBar>
      <Watermark>
        HAOHAND
        <Flame />
      </Watermark>
    </Desktop>
  );
}
